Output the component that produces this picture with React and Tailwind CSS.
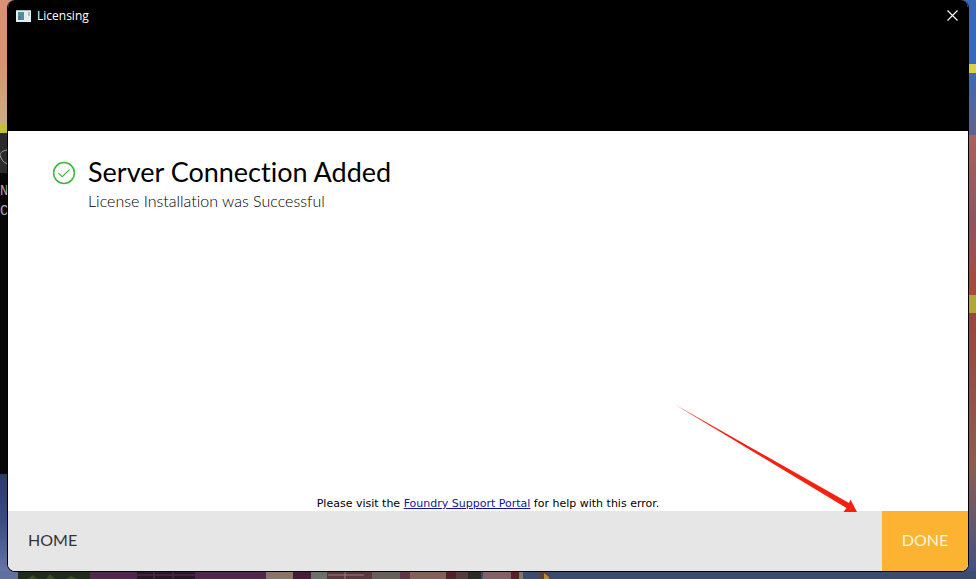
import { useState } from "react";

const Wallpaper = () => {
  return (
    <div className="absolute inset-0 flex flex-col overflow-hidden bg-[#43507f]" aria-hidden="true">
      <div className="flex min-h-0 flex-1 justify-between">
        <div className="flex w-4 flex-col">
          <div className="h-[123px] bg-linear-to-b from-[#d99078] via-[#d8936c] to-[#c9ad83]" />
          <div className="h-[10px] bg-[#c3c135]" />
          <div className="h-10 overflow-hidden bg-[#2b2b2b]">
            <svg className="mt-4 h-4 w-4" viewBox="0 0 16 16" fill="none" stroke="#a0a0a0">
              <path d="M7 1C2 2 0 4 0 6C1 10 3 13 7 15" />
            </svg>
          </div>
          <div className="h-[301px] overflow-hidden bg-[#080808] pt-2 font-['Liberation_Mono',monospace] text-sm leading-5 text-[#a8a8a8]">
            <p>N</p>
            <p>C</p>
          </div>
          <div className="flex-1 bg-linear-to-b from-[#2c3a68] via-[#3c4c84] to-[#6674a5]" />
        </div>
        <div className="flex w-4 flex-col">
          <div className="h-16 bg-[#3768b9]" />
          <div className="h-[9px] bg-[#d9d046]" />
          <div className="h-[62px] bg-linear-to-b from-[#3d69b4] to-[#5f618f]" />
          <div className="h-[160px] bg-linear-to-b from-[#a9635a] via-[#8d5560] to-[#a94a38]" />
          <div className="h-[18px] bg-[#b1a832]" />
          <div className="flex-1 bg-linear-to-b from-[#98463f] via-[#8a5c50] via-60% to-[#434f82]" />
        </div>
      </div>
      <svg className="h-2 w-full" viewBox="0 0 976 8" preserveAspectRatio="none">
        <rect width="976" height="8" fill="#3c4b72" />
        <rect width="18" height="8" fill="#6170a0" />
        <rect x="18" width="72" height="8" fill="#1f2c1b" />
        <path d="M28 8l5-4 4 4zM46 8l4-5 5 5zM66 8l5-3 6 3z" fill="#3b4a24" />
        <rect x="90" width="222" height="8" fill="#55264d" />
        <rect x="137" width="58" height="8" fill="#2a1428" />
        <path d="M154 0v8M173 0v8M137 4h58" stroke="#523551" />
        <rect x="266" width="27" height="8" fill="#8b7468" />
        <rect x="293" width="18" height="8" fill="#4b1a38" />
        <rect x="311" width="16" height="8" fill="#6c706b" />
        <rect x="327" width="45" height="8" fill="#5d3640" />
        <path d="M328 4h36M345 0v8" stroke="#987f7e" />
        <rect x="372" width="28" height="8" fill="#686058" />
        <rect x="400" width="10" height="8" fill="#633346" />
        <rect x="410" width="36" height="8" fill="#856059" />
        <rect x="446" width="10" height="8" fill="#54202a" />
        <rect x="456" width="24" height="8" fill="#573c3c" />
        <rect x="468" width="13" height="8" fill="#292c22" />
        <rect x="483" width="28" height="8" fill="#856064" />
        <rect x="511" width="8" height="8" fill="#5a202a" />
        <rect x="519" width="4" height="8" fill="#827869" />
        <path d="M540 0h5l4 5v3h-9z" fill="#633b38" />
        <path d="M544 2l5 4v2h-5z" fill="#b58a32" />
      </svg>
    </div>
  );
};

const TitleBar = ({ onClose }) => {
  return (
    <header className="flex h-[131px] items-start justify-between bg-black pt-1 pr-2 pl-2">
      <div className="flex h-6 items-center gap-[6px]">
        <svg className="h-3 w-[15px]" viewBox="0 0 15 12" aria-hidden="true">
          <rect width="15" height="12" fill="#e4edf0" />
          <rect width="15" height="1" fill="#a9b5bc" />
          <rect x="2" y="2" width="6" height="8" fill="#4e9293" />
          <rect x="2" y="6" width="3" height="4" fill="#5676a2" />
          <rect x="12" y="2" width="2" height="4" fill="#a4cbb4" />
        </svg>
        <h1 className="font-['Open_Sans',sans-serif] text-xs text-white">Licensing</h1>
      </div>
      <button type="button" aria-label="Close" onClick={onClose} className="flex h-[22px] w-4 items-center justify-center text-white">
        <svg className="h-[11px] w-[11px]" viewBox="0 0 11 11" fill="none" stroke="currentColor" strokeWidth="1.1">
          <path d="M.5.5l10 10M10.5.5l-10 10" />
        </svg>
      </button>
    </header>
  );
};

const Arrow = () => {
  return (
    <svg className="pointer-events-none absolute right-[111px] -bottom-px h-[108px] w-[183px]" viewBox="0 0 183 108" aria-hidden="true">
      <path d="M0 0L175 99L176.5 95.5L183 108H169.5L172.5 104Z" fill="#f5200f" />
    </svg>
  );
};

const App = () => {
  const [open, setOpen] = useState(true);
  const close = () => setOpen(false);

  return (
    <div className="relative flex h-screen px-[7px] pb-[7px]">
      <Wallpaper />
      {open && (
        <div className="relative flex flex-1 flex-col overflow-hidden rounded-lg border border-t-0 border-black bg-white">
          <TitleBar onClose={close} />
          <main className="relative flex flex-1 flex-col justify-between pt-6">
            <section className="flex gap-3 px-11">
              <svg className="mt-[6px] h-6 w-6 shrink-0" viewBox="0 0 24 24" fill="none" stroke="#3db937" aria-hidden="true">
                <circle cx="12" cy="12" r="10.4" strokeWidth="1.5" />
                <path d="M6.5 12.2l3.8 3.5 7.2-7" strokeWidth="1.1" />
              </svg>
              <div className="font-['Lato',sans-serif] [font-variant-ligatures:none]">
                <h2 className="text-[27px] leading-[34px] text-black">Server Connection Added</h2>
                <p className="text-base font-light text-black">License Installation was Successful</p>
              </div>
            </section>
            <p className="text-center font-['DejaVu_Sans',sans-serif] text-[11px] leading-[14px] text-black">
              Please visit the{" "}
              <a href="#support" className="text-[#1414a0] underline">
                Foundry Support Portal
              </a>{" "}
              for help with this error.
            </p>
            <Arrow />
          </main>
          <footer className="flex h-[60px] justify-between bg-[#e6e6e6] font-['Lato',sans-serif] text-base">
            <button type="button" className="px-5 pb-[2px] text-[#333]">
              HOME
            </button>
            <button type="button" onClick={close} className="w-[86px] bg-[#fbb331] pb-[2px] text-[#fff6dc]">
              DONE
            </button>
          </footer>
        </div>
      )}
    </div>
  );
};

export default App;
